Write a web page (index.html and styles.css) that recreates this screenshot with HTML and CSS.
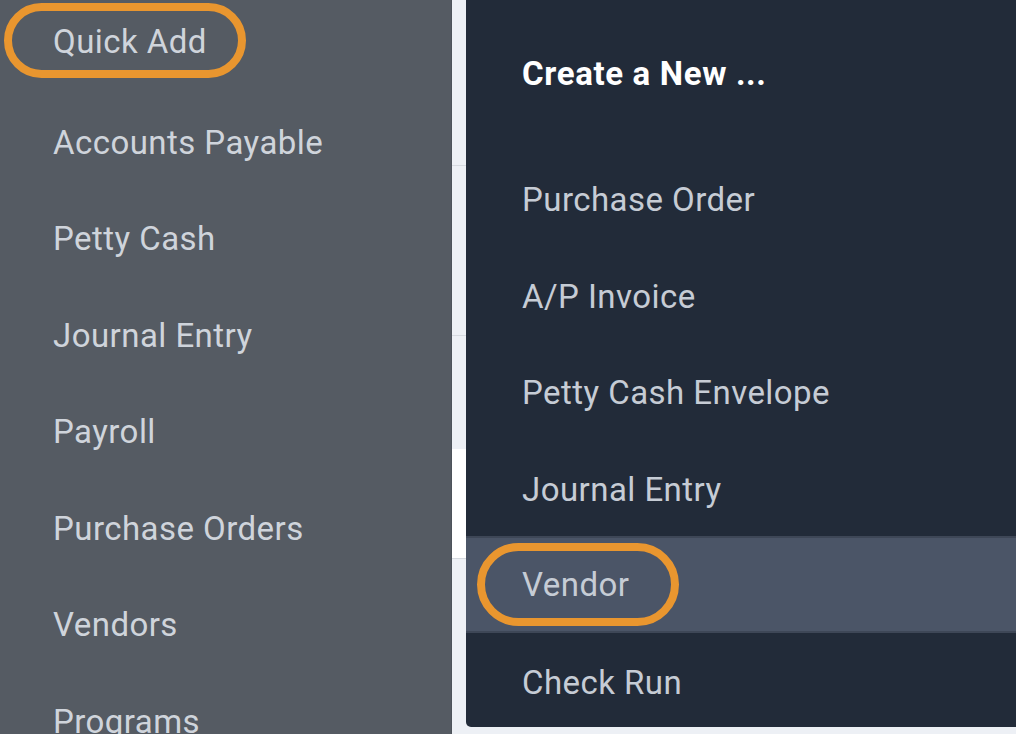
FILE: index.html
```html
<!DOCTYPE html>
<html lang="en">
<head>
<meta charset="utf-8">
<title>Quick Add</title>
<link rel="stylesheet" href="styles.css">
</head>
<body>
<div class="app">
  <nav class="sidebar">
    <div class="nav-item nav-first"><span class="annot annot-quick">Quick Add</span></div>
    <div class="nav-item">Accounts Payable</div>
    <div class="nav-item">Petty Cash</div>
    <div class="nav-item">Journal Entry</div>
    <div class="nav-item">Payroll</div>
    <div class="nav-item">Purchase Orders</div>
    <div class="nav-item">Vendors</div>
    <div class="nav-item">Programs</div>
  </nav>
  <main class="content">
    <div class="bg-row bg-a"></div>
    <div class="bg-row bg-b"></div>
    <div class="bg-row bg-c"></div>
    <div class="bg-row bg-d"></div>
    <div class="bg-row bg-e"></div>
    <div class="menu">
      <div class="menu-head">Create a New ...</div>
      <div class="menu-item">Purchase Order</div>
      <div class="menu-item">A/P Invoice</div>
      <div class="menu-item">Petty Cash Envelope</div>
      <div class="menu-item">Journal Entry</div>
      <div class="menu-item menu-active"><span class="annot annot-vendor">Vendor</span></div>
      <div class="menu-item">Check Run</div>
    </div>
  </main>
</div>
</body>
</html>
```
FILE: styles.css
```css
* { box-sizing: border-box; }
html, body { margin: 0; padding: 0; }
body {
  width: 1016px;
  height: 734px;
  overflow: hidden;
  font-family: Roboto, "Liberation Sans", sans-serif;
  background: #edf0f5;
}
.app {
  display: flex;
  height: 734px;
}
.sidebar {
  width: 452px;
  flex: none;
  background: #555b63;
  border-right: 1px solid #4d535b;
  color: #cfd4db;
  font-size: 33px;
  letter-spacing: 0.45px;
  overflow: hidden;
}
.nav-item {
  height: 96.5px;
  display: flex;
  align-items: center;
  padding-left: 53px;
  white-space: nowrap;
}
.nav-first {
  height: 84px;
  margin-bottom: 9.75px;
}
.annot {
  display: inline-flex;
  align-items: center;
  border: 8px solid #e9962f;
  border-radius: 999px;
}
.annot-quick {
  height: 75px;
  margin-left: -49px;
  padding: 2px 31px 0 41px;
  margin-top: -3px;
}
.annot-vendor {
  height: 83px;
  margin-left: -45px;
  padding: 0 42px 0 37px;
}
.content {
  flex: 1;
  position: relative;
  display: flex;
  flex-direction: column;
}
.bg-row { flex: none; border-bottom: 1px solid #d6dae0; }
.bg-a { height: 166px; }
.bg-b { height: 170px; }
.bg-c { height: 113px; border-bottom: none; }
.bg-d { height: 110px; background: #ffffff; }
.bg-e { flex: 1; border-bottom: none; }
.menu {
  position: absolute;
  left: 14px;
  top: 0;
  right: 0;
  height: 727px;
  background: #222b39;
  border-bottom-left-radius: 5px;
  overflow: hidden;
  color: #c6ccd5;
  font-size: 33px;
  letter-spacing: 0.45px;
}
.menu-head {
  height: 150px;
  padding: 0 0 4px 56px;
  display: flex;
  align-items: center;
  color: #ffffff;
  font-weight: 700;
  letter-spacing: 0.65px;
}
.menu-item {
  height: 96.5px;
  display: flex;
  align-items: center;
  padding: 3px 0 0 56px;
  white-space: nowrap;
}
.menu-active {
  background: #4b5567;
  border-top: 2px solid #3e4757;
  border-bottom: 2px solid #3e4757;
  padding-top: 0;
}
```
